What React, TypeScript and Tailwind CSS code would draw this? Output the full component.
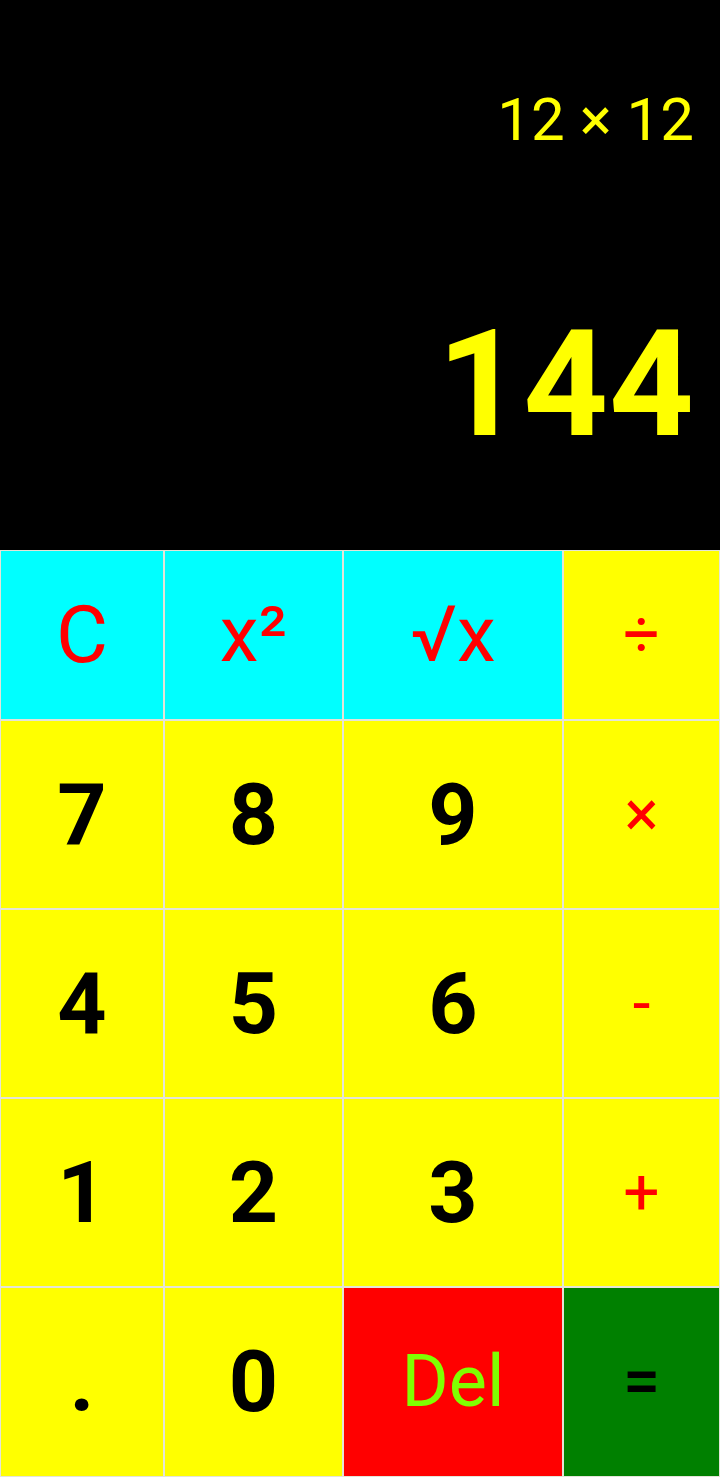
import React from 'react';

type Key = {
  label: string;
  bg: string;
  text: string;
};

const keys: Key[] = [
  { label: 'C', bg: 'bg-[#00ffff]', text: 'text-[#ff0000] text-[80px] font-normal' },
  { label: 'x²', bg: 'bg-[#00ffff]', text: 'text-[#ff0000] text-[78px] font-normal' },
  { label: '√x', bg: 'bg-[#00ffff]', text: 'text-[#ff0000] text-[78px] font-normal' },
  { label: '÷', bg: 'bg-[#ffff00]', text: 'text-[#ff0000] text-[64px] font-normal' },
  { label: '7', bg: 'bg-[#ffff00]', text: 'text-black text-[86px] font-bold' },
  { label: '8', bg: 'bg-[#ffff00]', text: 'text-black text-[86px] font-bold' },
  { label: '9', bg: 'bg-[#ffff00]', text: 'text-black text-[86px] font-bold' },
  { label: '×', bg: 'bg-[#ffff00]', text: 'text-[#ff0000] text-[64px] font-normal' },
  { label: '4', bg: 'bg-[#ffff00]', text: 'text-black text-[86px] font-bold' },
  { label: '5', bg: 'bg-[#ffff00]', text: 'text-black text-[86px] font-bold' },
  { label: '6', bg: 'bg-[#ffff00]', text: 'text-black text-[86px] font-bold' },
  { label: '-', bg: 'bg-[#ffff00]', text: 'text-[#ff0000] text-[64px] font-normal' },
  { label: '1', bg: 'bg-[#ffff00]', text: 'text-black text-[86px] font-bold' },
  { label: '2', bg: 'bg-[#ffff00]', text: 'text-black text-[86px] font-bold' },
  { label: '3', bg: 'bg-[#ffff00]', text: 'text-black text-[86px] font-bold' },
  { label: '+', bg: 'bg-[#ffff00]', text: 'text-[#ff0000] text-[64px] font-normal' },
  { label: '.', bg: 'bg-[#ffff00]', text: 'text-black text-[86px] font-bold' },
  { label: '0', bg: 'bg-[#ffff00]', text: 'text-black text-[86px] font-bold' },
  { label: 'Del', bg: 'bg-[#ff0000]', text: 'text-[#80ff00] text-[72px] font-normal' },
  { label: '=', bg: 'bg-[#008000]', text: 'text-black text-[66px] font-medium' },
];

const App = (): JSX.Element => {
  return (
    <div className="w-[720px] h-[1477px] bg-black flex flex-col font-['Roboto',sans-serif]">
      <section className="h-[550px] flex flex-col items-end pr-[26px]">
        <div className="mt-[80px] h-[80px] text-[60px] leading-[80px] text-[#ffff00]">
          12 × 12
        </div>
        <div className="mt-[151px] text-[148px] leading-[148px] tracking-[1px] font-bold text-[#ffff00] -mr-[1px]">
          144
        </div>
      </section>
      <section className="flex-1 bg-[#e4e4d8] p-[1px] grid grid-cols-[162px_177px_218px_1fr] grid-rows-[168px_187px_187px_187px_1fr] gap-[2px]">
        {keys.map((k, i) => (
          <button
            key={i}
            className={`${k.bg} ${k.text} flex items-center justify-center leading-none`}
          >
            {k.label}
          </button>
        ))}
      </section>
    </div>
  );
};

export default App;
